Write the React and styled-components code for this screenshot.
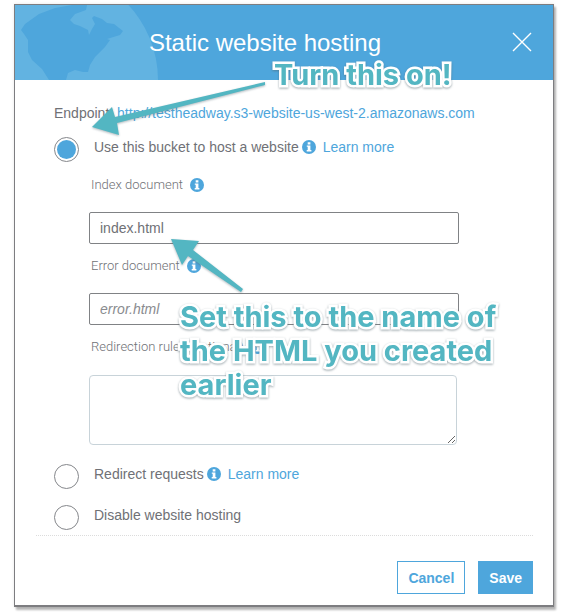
import React from "react";
import styled, { createGlobalStyle, css } from "styled-components";

const blue = "#4ea6dc";
const teal = "#53b6c2";

const GlobalStyle = createGlobalStyle`
  * { box-sizing: border-box; }
  body {
    margin: 0;
    background: #fff;
    color: #6f7176;
    font: 14px/20px "Liberation Sans", Arial, sans-serif;
  }
`;

const Page = styled.main`
  padding: 4px 14px 8px;
`;

const Dialog = styled.section`
  position: relative;
  background: #fff;
  border: 1px solid #7d7d80;
  border-bottom-width: 2px;
  box-shadow: 2px 3px 2px rgba(0, 0, 0, 0.28), 0 0 3px rgba(0, 0, 0, 0.1);
`;

const Header = styled.header`
  position: relative;
  display: flex;
  align-items: center;
  justify-content: center;
  height: 75px;
  overflow: hidden;
  background: ${blue};
  color: #fff;
`;

const Globe = styled.svg`
  position: absolute;
  left: 0;
  top: 0;
`;

const Title = styled.h1`
  position: relative;
  margin: 0 38px 0 0;
  font-size: 24px;
  line-height: 32px;
  font-weight: 400;
`;

const CloseButton = styled.button`
  position: absolute;
  right: 20px;
  top: 26px;
  display: flex;
  padding: 0;
  border: 0;
  background: none;
  color: #fff;
  cursor: pointer;
`;

const Body = styled.form`
  padding: 23px 20px 11px 21px;
`;

const Options = styled.div`
  padding: 0 0 5px 18px;
  border-bottom: 1px dotted #dcdcdc;
`;

const Endpoint = styled.p`
  margin: 0 0 14px;
`;

const Link = styled.a`
  color: ${blue};
  text-decoration: none;
`;

const Option = styled.div`
  display: flex;
  align-items: center;
  min-height: 25px;
  margin-bottom: ${(p) => (p.$spaced ? 16 : 0)}px;
`;

const Radio = styled.input.attrs({ type: "radio" })`
  appearance: none;
  flex: none;
  width: 25px;
  height: 25px;
  margin: 0 15px 0 0;
  border: 1px solid #85878b;
  border-radius: 50%;
  background: #fff;
  &:checked {
    padding: 2px;
    background: ${blue} content-box;
  }
`;

const OptionText = styled.div`
  display: flex;
  align-items: center;
  height: 25px;
  padding-bottom: 5px;
`;

const InfoIcon = styled.svg`
  flex: none;
  margin: 0 7px 0 ${(p) => (p.$wide ? 7 : 3)}px;
`;

const Fields = styled.div`
  display: flex;
  flex-direction: column;
  max-width: 405px;
  padding: 13px 0 19px 35px;
`;

const FieldLabel = styled.div`
  display: flex;
  align-items: center;
  padding-left: 2px;
  font: 300 13px/20px "Roboto", "Liberation Sans", sans-serif;
`;

const control = css`
  padding: 0 10px;
  color: #6f7176;
  background: #fff;
  font: 14px/20px "Liberation Sans", Arial, sans-serif;
`;

const TextInput = styled.input`
  ${control}
  width: 100%;
  height: 32px;
  margin: 17px 0 12px;
  border: 1px solid #808285;
  border-radius: 2px;
  &::placeholder {
    color: #8a8c90;
    font-style: italic;
    opacity: 1;
  }
`;

const TextArea = styled.textarea`
  ${control}
  width: calc(100% - 2px);
  height: 70px;
  margin-top: 18px;
  border: 1px solid #c8d3d9;
  border-radius: 4px;
`;

const Footer = styled.footer`
  display: flex;
  justify-content: flex-end;
  gap: 13px;
  padding-top: 25px;
`;

const Button = styled.button`
  height: 33px;
  padding: 0 10px;
  border: 1px solid ${blue};
  background: ${(p) => (p.$primary ? blue : "#fff")};
  color: ${(p) => (p.$primary ? "#fff" : blue)};
  font: 700 14px/20px "Liberation Sans", Arial, sans-serif;
`;

const Note = styled.p`
  position: absolute;
  left: ${(p) => p.$left}px;
  top: ${(p) => p.$top}px;
  width: max-content;
  max-width: 335px;
  margin: 0;
  color: ${teal};
  font: 700 29px/34px "Inter", sans-serif;
  -webkit-text-stroke: 5px #fff;
  paint-order: stroke fill;
  filter: drop-shadow(0 1px 1px rgba(80, 100, 110, 0.55));
  pointer-events: none;
`;

const Arrow = styled.svg`
  position: absolute;
  left: ${(p) => p.$left}px;
  top: ${(p) => p.$top}px;
  fill: ${teal};
  filter: drop-shadow(0 1px 1px rgba(80, 100, 110, 0.45));
  pointer-events: none;
`;

function Info({ wide }) {
  return (
    <InfoIcon $wide={wide} width="14" height="14" viewBox="0 0 14 14" aria-hidden="true">
      <circle cx="7" cy="7" r="7" fill={blue} />
      <path d="M5.7 2.2h2.7v2.2H5.7zM4.8 5.4h3.6v4.7h1v1.4H4.7v-1.4h1V6.8h-.9z" fill="#fff" />
    </InfoIcon>
  );
}

export default function App() {
  return (
    <Page>
      <GlobalStyle />
      <Dialog role="dialog" aria-labelledby="dialog-title">
        <Header>
          <Globe width="145" height="75" viewBox="0 0 145 75" aria-hidden="true">
            <circle cx="33" cy="75" r="110" fill="#62b3e1" />
            <path
              fill={blue}
              d="M6 25 10 19 24 9 40 3 57 0H72L71 5 60 9 55 15 59 19 65 21 73 25 74 30 77 24 80 19 77 13 79 11 87 14 92 18 99 19 108 26 105 30 92 34 95 35 90 42 80 52 75 60 73 67 68 67 60 65 53 68 51 75H34L27 64 17 55 13 47V35L9 29Z"
            />
          </Globe>
          <Title id="dialog-title">Static website hosting</Title>
          <CloseButton type="button" aria-label="Close">
            <svg width="22" height="22" viewBox="0 0 22 22" stroke="currentColor" strokeWidth="1.4">
              <path d="M2 2 20 20M20 2 2 20" />
            </svg>
          </CloseButton>
        </Header>
        <Body onSubmit={(e) => e.preventDefault()}>
          <Options>
            <Endpoint>
              Endpoint: <Link href="#endpoint">http://testheadway.s3-website-us-west-2.amazonaws.com</Link>
            </Endpoint>
            <Option>
              <Radio id="host" name="hosting" defaultChecked />
              <OptionText>
                <label htmlFor="host">Use this bucket to host a website</label>
                <Info />
                <Link href="#hosting">Learn more</Link>
              </OptionText>
            </Option>
            <Fields>
              <FieldLabel>
                <label htmlFor="index">Index document</label>
                <Info wide />
              </FieldLabel>
              <TextInput id="index" defaultValue="index.html" />
              <FieldLabel>
                <label htmlFor="error">Error document</label>
                <Info wide />
              </FieldLabel>
              <TextInput id="error" placeholder="error.html" />
              <FieldLabel>
                <label htmlFor="rules">Redirection rules (optional)</label>
                <Info wide />
              </FieldLabel>
              <TextArea id="rules" />
            </Fields>
            <Option $spaced>
              <Radio id="redirect" name="hosting" />
              <OptionText>
                <label htmlFor="redirect">Redirect requests</label>
                <Info />
                <Link href="#redirect-help">Learn more</Link>
              </OptionText>
            </Option>
            <Option>
              <Radio id="disable" name="hosting" />
              <OptionText>
                <label htmlFor="disable">Disable website hosting</label>
              </OptionText>
            </Option>
          </Options>
          <Footer>
            <Button type="button">Cancel</Button>
            <Button type="submit" $primary>Save</Button>
          </Footer>
        </Body>
        <Arrow $left={75} $top={76} width="178" height="64" viewBox="0 0 178 64" aria-hidden="true">
          <path d="M175 1V4L27 42 29 54 2 46 22 26 25 36Z" />
        </Arrow>
        <Arrow $left={155} $top={232} width="76" height="62" viewBox="0 0 76 62" aria-hidden="true">
          <path d="M1 2 29 4 23 13 73 52 71 55 18 19 12 28Z" />
        </Arrow>
        <Note $left={259} $top={53}>Turn this on!</Note>
        <Note $left={165} $top={295}>
          Set this to the name of the HTML you created earlier
        </Note>
      </Dialog>
    </Page>
  );
}
